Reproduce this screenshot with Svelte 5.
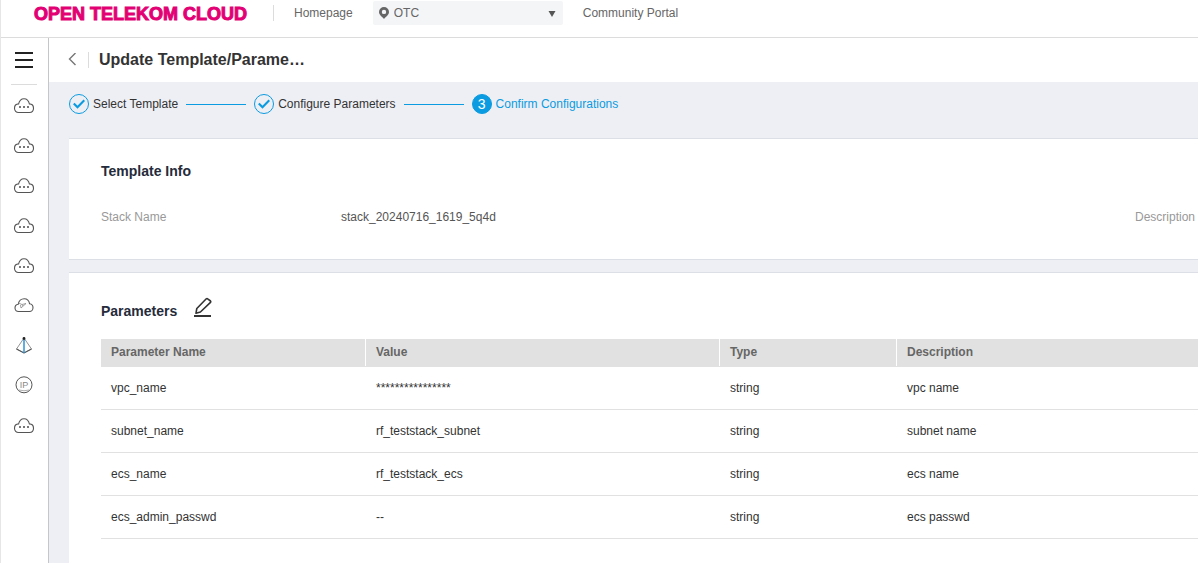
<script lang="ts">
	type Step = { label: string; state: 'done' | 'current' };

	const steps: Step[] = [
		{ label: 'Select Template', state: 'done' },
		{ label: 'Configure Parameters', state: 'done' },
		{ label: 'Confirm Configurations', state: 'current' }
	];

	const shortcuts = ['cloud', 'cloud', 'cloud', 'cloud', 'cloud', 'scaling', 'vpc', 'ip', 'cloud'];

	const parameters = [
		{ name: 'vpc_name', value: '****************', type: 'string', description: 'vpc name' },
		{ name: 'subnet_name', value: 'rf_teststack_subnet', type: 'string', description: 'subnet name' },
		{ name: 'ecs_name', value: 'rf_teststack_ecs', type: 'string', description: 'ecs name' },
		{ name: 'ecs_admin_passwd', value: '--', type: 'string', description: 'ecs passwd' }
	];

	let region = $state('OTC');
</script>

<div class="console">
	<header class="topbar">
		<a class="brand" href="#home">OPEN TELEKOM CLOUD</a>
		<a class="home-link" href="#home">Homepage</a>
		<div class="region">
			<svg class="pin" width="10" height="12" viewBox="0 0 10 12" aria-hidden="true">
				<path d="M5 0a5 5 0 0 0-5 5c0 3 3 4.500 5 7 2-2.500 5-4 5-7a5 5 0 0 0-5-5zm0 2.700a2.200 2.200 0 1 1 0 4.400 2.200 2.200 0 0 1 0-4.400z" fill="#666" />
			</svg>
			<select bind:value={region} aria-label="Region">
				<option>OTC</option>
			</select>
			<svg class="caret" width="8" height="6" viewBox="0 0 8 6" aria-hidden="true">
				<path d="M.5 0h7L4 6z" fill="#555" />
			</svg>
		</div>
		<a href="#community">Community Portal</a>
	</header>

	<div class="body">
		<nav class="sidebar" aria-label="Services">
			<button class="menu" aria-label="Menu">
				<svg width="18" height="16" viewBox="0 0 18 16">
					<path d="M0 1h18M0 8h18M0 15h18" stroke="#222" stroke-width="2" />
				</svg>
			</button>
			{#each shortcuts as icon}
				<a class="shortcut" href="#service" aria-label={icon}>
					<svg width="22" height="20" viewBox="0 0 22 20" fill="none" stroke="#555" stroke-width="1.1">
						{#if icon === 'cloud'}
							<path d="M5.500 17.500C3.200 17.500 1.500 15.700 1.500 13.300S3.300 9 5.600 8.900C6.200 6.200 8.300 3.700 11 3.700s4.800 2.500 5.400 5.200c2.300.1 4.100 2 4.100 4.400s-1.700 4.200-4 4.200z" />
							<path d="M6 12h2M10 12h2M14 12h2" stroke-width="2" stroke="#777" />
						{:else if icon === 'scaling'}
							<path d="M5.500 16.500C3.500 16.500 2 15 2 13s1.400-3.400 3.200-3.700C5.700 6 8.300 3.700 11.200 3.700c3.200 0 5 2.500 5.400 5.100 2 .3 3.400 1.900 3.400 3.900s-1.500 3.800-3.500 3.800z" />
							<path d="M5.500 8l3.500 1.500 4-1-5 4.500-.5-3M9 9.500l1 1.500" stroke-width=".8" stroke="#888" />
						{:else if icon === 'vpc'}
							<path d="M11 3L3.500 14 11 18l7.500-4z" stroke-width=".8" stroke="#777" />
							<path d="M3.500 14l7.500 4 7.500-4" />
							<path d="M11 3v15" stroke="#2b94d8" stroke-width="1.5" />
							<circle cx="11" cy="3.500" r="1.400" fill="#222" stroke="none" />
						{:else}
							<circle cx="11" cy="9.800" r="8" stroke-width="1" />
							<text x="11" y="13" text-anchor="middle" fill="#888" stroke="none" font-size="9">IP</text>
							<path d="M6 15q5 1.500 10 0" stroke="#999" stroke-width=".8" />
						{/if}
					</svg>
				</a>
			{/each}
		</nav>

		<main>
			<div class="titlebar">
				<button class="back" aria-label="Back">
					<svg width="8" height="14" viewBox="0 0 8 14" fill="none" stroke="#777" stroke-width="1.4">
						<path d="M7.500 0L1.500 6l6 6" />
					</svg>
				</button>
				<h1>Update Template/Parame…</h1>
			</div>

			<ol class="steps">
				{#each steps as step, i}
					<li class={step.state}>
						<span class="marker">
							{#if step.state === 'done'}
								<svg width="12" height="10" viewBox="0 0 12 10" fill="none" stroke="#0b9be0" stroke-width="2.2">
									<path d="M.8 4.500l3.700 3.700L11.300 1.200" />
								</svg>
							{:else}
								{i + 1}
							{/if}
						</span>
						{step.label}
					</li>
				{/each}
			</ol>

			<section class="card info">
				<h2>Template Info</h2>
				<dl>
					<dt>Stack Name</dt>
					<dd>stack_20240716_1619_5q4d</dd>
					<dt>Description</dt>
				</dl>
			</section>

			<section class="card params">
				<div class="heading">
					<h2>Parameters</h2>
					<button class="edit" aria-label="Edit parameters">
						<svg width="20" height="22" viewBox="0 0 20 22" fill="none" stroke="#333">
							<path d="M3 16.200L3.800 11.500 13.300 1.800q.7-.6 1.400 0l2.800 2.200q.6.7 0 1.400L7.400 15z" stroke-width="1.6" stroke-linejoin="round" />
							<path d="M1 19h17" stroke-width="2" />
						</svg>
					</button>
				</div>
				<table>
					<colgroup>
						<col class="col-name" />
						<col class="col-value" />
						<col class="col-type" />
						<col />
					</colgroup>
					<thead>
						<tr>
							<th><span>Parameter Name</span></th>
							<th><span>Value</span></th>
							<th><span>Type</span></th>
							<th><span>Description</span></th>
						</tr>
					</thead>
					<tbody>
						{#each parameters as p}
							<tr>
								<td>{p.name}</td>
								<td>{p.value}</td>
								<td>{p.type}</td>
								<td>{p.description}</td>
							</tr>
						{/each}
					</tbody>
				</table>
			</section>
		</main>
	</div>
</div>

<style>
	:global(body) {
		margin: 0;
	}
	.console {
		display: flex;
		flex-direction: column;
		min-height: 100vh;
		box-sizing: border-box;
		border-left: 1px solid #e6e6e6;
		background: #fff;
		color: #333;
		font: 12px/16px 'Liberation Sans', Arial, sans-serif;
	}
	a {
		color: #666;
		text-decoration: none;
	}
	button {
		display: flex;
		padding: 0;
		border: 0;
		background: none;
		cursor: pointer;
	}
	h1,
	h2,
	dl,
	dd,
	ol {
		margin: 0;
		padding: 0;
	}

	.topbar {
		display: flex;
		align-items: center;
		gap: 20px;
		height: 24px;
		padding: 1px 0 12px 33px;
		border-bottom: 1px solid #dcdcdc;
	}
	.brand {
		width: 219px;
		padding-top: 2px;
		color: #e20074;
		font-size: 18px;
		font-weight: bold;
		line-height: 24px;
		white-space: nowrap;
		-webkit-text-stroke: 1px #e20074;
	}
	.home-link {
		padding-left: 20px;
		border-left: 1px solid #dcdcdc;
	}
	.region {
		position: relative;
		width: 190px;
	}
	.region select {
		display: block;
		width: 100%;
		height: 24px;
		padding: 0 20px 0 21px;
		appearance: none;
		border: 0;
		border-radius: 2px;
		background: #f4f5f7;
		color: #666;
		font: inherit;
	}
	.pin,
	.caret {
		position: absolute;
		pointer-events: none;
	}
	.pin {
		top: 6px;
		left: 6px;
	}
	.caret {
		top: 10px;
		right: 7px;
	}

	.body {
		display: flex;
		flex: 1;
	}
	.sidebar {
		display: flex;
		flex-direction: column;
		align-items: center;
		flex: none;
		width: 46px;
		padding-right: 1px;
		border-right: 1px solid #c4c6cc;
	}
	.menu {
		justify-content: center;
		width: 26px;
		padding: 14px 0 16px;
		border-bottom: 1px solid #dcdcdc;
	}
	.shortcut {
		display: flex;
		align-items: center;
		height: 40px;
	}

	main {
		flex: 1;
		min-width: 0;
		background: #eeeff5;
	}
	.titlebar {
		display: flex;
		align-items: center;
		gap: 12px;
		height: 44px;
		padding-left: 19px;
		background: #fff;
	}
	h1 {
		padding-left: 10px;
		border-left: 1px solid #dcdcdc;
		font-size: 16px;
		line-height: 16px;
	}

	.steps {
		display: flex;
		gap: 8px;
		padding: 12px 20px 24px;
		list-style: none;
	}
	.steps li {
		display: flex;
		align-items: center;
		gap: 4px;
	}
	.steps li + li::before {
		content: '';
		width: 60px;
		height: 1px;
		margin-right: 4px;
		background: #0b9be0;
	}
	.marker {
		display: flex;
		align-items: center;
		justify-content: center;
		box-sizing: border-box;
		width: 20px;
		height: 20px;
		border: 1px solid #0b9be0;
		border-radius: 50%;
	}
	.steps .current {
		color: #0b9be0;
	}
	.current .marker {
		background: #0b9be0;
		color: #fff;
		font-size: 14px;
	}

	.card {
		margin-left: 20px;
		padding-left: 32px;
		border-top: 1px solid #dcdfe6;
		background: #fff;
	}
	h2 {
		color: #252b3a;
		font-size: 14px;
		line-height: 20px;
	}
	.info {
		margin-bottom: 12px;
		padding-top: 22px;
		padding-bottom: 34px;
		border-bottom: 1px solid #dcdfe6;
	}
	dl {
		display: grid;
		grid-template-columns: 240px 1fr 63px;
		margin-top: 28px;
	}
	dt {
		color: #999;
	}
	dd {
		color: #555;
	}
	.params {
		padding-top: 24px;
		padding-bottom: 34px;
	}
	.heading {
		display: flex;
		gap: 16px;
		height: 42px;
	}
	.heading h2 {
		padding-top: 4px;
	}
	.edit {
		align-self: flex-start;
	}

	table {
		width: 100%;
		table-layout: fixed;
		border-collapse: collapse;
	}
	.col-name {
		width: 265px;
	}
	.col-value {
		width: 354px;
	}
	.col-type {
		width: 177px;
	}
	th {
		padding: 0 0 1px;
		background: #e1e1e1;
		color: #666;
		text-align: left;
	}
	th span {
		display: block;
		padding: 0 10px;
		border-right: 1px solid #fff;
		line-height: 27px;
	}
	th:last-child span {
		border-right: 0;
	}
	td {
		height: 42px;
		padding: 0 10px;
		border-bottom: 1px solid #e1e1e1;
	}
</style>
